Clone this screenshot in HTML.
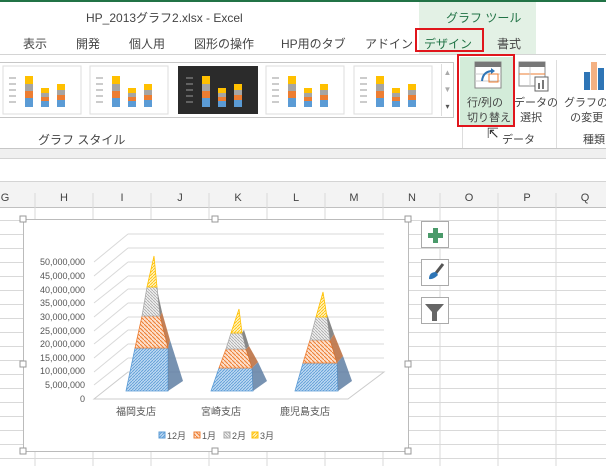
<!DOCTYPE html>
<html><head><meta charset="utf-8"><style>
*{margin:0;padding:0;box-sizing:border-box}
body{width:606px;height:466px;overflow:hidden;background:#fff;font-family:"Liberation Sans","Noto Sans CJK JP",sans-serif;position:relative;color:#444}
.a{position:absolute;white-space:nowrap}
.tab{position:absolute;top:35px;font-size:12px;color:#444}
</style></head><body>
<div class="a" style="left:0;top:0;width:606px;height:2px;background:#217346"></div>
<div class="a" style="left:419px;top:2px;width:117px;height:53px;background:#e3f1e5"></div>
<div class="a" style="left:86px;top:9px;font-size:12px;color:#444">HP_2013グラフ2.xlsx - Excel</div>
<div class="a" style="left:446px;top:9px;font-size:12px;color:#217346">グラフ ツール</div>
<div class="tab" style="left:23px">表示</div>
<div class="tab" style="left:76px">開発</div>
<div class="tab" style="left:129px">個人用</div>
<div class="tab" style="left:194px">図形の操作</div>
<div class="tab" style="left:281px">HP用のタブ</div>
<div class="tab" style="left:365px">アドイン</div>
<div class="a" style="left:415px;top:28px;width:69px;height:24px;border:2px solid #e0161c"></div>
<div class="tab" style="left:424px;color:#217346">デザイン</div>
<div class="tab" style="left:497px">書式</div>
<div class="a" style="left:0;top:54px;width:606px;height:1px;background:#d4d4d4"></div>
<div class="a" style="left:0;top:62px;width:454px;height:56px;border:1px solid #c6c6c6;border-left:none"></div>
<svg class="a" style="left:0;top:64px" width="440" height="52">
<defs><g id="th">
<g stroke="#999" stroke-width="1"><line x1="6" y1="12" x2="13" y2="12"/><line x1="6" y1="18" x2="13" y2="18"/><line x1="6" y1="24" x2="13" y2="24"/><line x1="6" y1="30" x2="13" y2="30"/><line x1="6" y1="36" x2="13" y2="36"/></g>
<rect x="22" y="10" width="8" height="8" fill="#ffc000"/><rect x="22" y="18" width="8" height="7" fill="#a5a5a5"/><rect x="22" y="25" width="8" height="7" fill="#ed7d31"/><rect x="22" y="32" width="8" height="9" fill="#5b9bd5"/>
<rect x="38" y="22" width="8" height="5" fill="#ffc000"/><rect x="38" y="27" width="8" height="4" fill="#a5a5a5"/><rect x="38" y="31" width="8" height="4" fill="#ed7d31"/><rect x="38" y="35" width="8" height="6" fill="#5b9bd5"/>
<rect x="54" y="18" width="8" height="6" fill="#ffc000"/><rect x="54" y="24" width="8" height="5" fill="#a5a5a5"/><rect x="54" y="29" width="8" height="5" fill="#ed7d31"/><rect x="54" y="34" width="8" height="7" fill="#5b9bd5"/></g></defs>
<g fill="#fff" stroke="#ddd"><rect x="3" y="2" width="78" height="48"/><rect x="90" y="2" width="78" height="48"/><rect x="266" y="2" width="78" height="48"/><rect x="354" y="2" width="78" height="48"/></g>
<rect x="178" y="2" width="80" height="48" fill="#2b2b2b"/>
<use href="#th" x="3" y="2"/><use href="#th" x="90" y="2"/><use href="#th" x="180" y="2"/>
<use href="#th" x="266" y="2"/><use href="#th" x="354" y="2"/>
</svg>
<div class="a" style="left:441px;top:64px;width:12px;height:52px;border-left:1px solid #ddd;font-size:8px;color:#aaa;text-align:center;line-height:17px">▲<br>▼<br><span style="color:#555">▾</span></div>
<div class="a" style="left:38px;top:131px;font-size:12px;color:#444">グラフ スタイル</div>
<div class="a" style="left:462px;top:60px;width:1px;height:88px;background:#ddd"></div>
<div class="a" style="left:556px;top:60px;width:1px;height:88px;background:#ddd"></div>
<div class="a" style="left:460px;top:57px;width:53px;height:68px;background:#d3ecd9"></div>
<div class="a" style="left:457px;top:54px;width:58px;height:73px;border:2px solid #e0161c"></div>
<svg class="a" style="left:474px;top:61px" width="30" height="30"><rect x="1" y="1" width="26" height="26" fill="#fff" stroke="#888"/><rect x="1" y="1" width="26" height="5" fill="#777"/><line x1="1" y1="13" x2="27" y2="13" stroke="#ccc"/><line x1="1" y1="20" x2="27" y2="20" stroke="#ccc"/><rect x="15" y="13" width="9" height="8" fill="none" stroke="#ed7d31"/><path d="M8 20 Q9 10 19 10" fill="none" stroke="#2e75b6" stroke-width="2"/><path d="M17 7l4 3-4 3z" fill="#2e75b6"/></svg>
<div class="a" style="left:467px;top:96px;font-size:11px;line-height:15px;color:#444">行/列の<br>切り替え</div>
<svg class="a" style="left:518px;top:61px" width="32" height="32"><rect x="1" y="1" width="26" height="24" fill="#fff" stroke="#888"/><rect x="1" y="1" width="26" height="5" fill="#777"/><line x1="1" y1="13" x2="27" y2="13" stroke="#ed7d31"/><line x1="12" y1="6" x2="12" y2="25" stroke="#ccc"/><rect x="17" y="16" width="13" height="14" fill="#fff" stroke="#666"/><rect x="20" y="22" width="2" height="6" fill="#777"/><rect x="24" y="19" width="2" height="9" fill="#777"/></svg>
<div class="a" style="left:514px;top:96px;font-size:11px;line-height:15px;color:#444">データの<br>&nbsp;&nbsp;選択</div>
<svg class="a" style="left:583px;top:60px" width="23" height="32"><rect x="1" y="12" width="6" height="18" fill="#2e75b6"/><rect x="8" y="2" width="6" height="28" fill="#f4b183"/><rect x="15" y="8" width="6" height="22" fill="#2e75b6"/></svg>
<div class="a" style="left:564px;top:96px;font-size:11px;line-height:15px">グラフの種<br>&nbsp;&nbsp;の変更</div>
<div class="a" style="left:502px;top:131px;font-size:11px">データ</div>
<div class="a" style="left:583px;top:131px;font-size:11px">種類</div>
<div class="a" style="left:487px;top:125px;font-size:14px;color:#333">⇱</div>
<div class="a" style="left:0;top:148px;width:606px;height:1px;background:#c6c6c6"></div>
<div class="a" style="left:0;top:149px;width:606px;height:9px;background:#f0f0f0"></div>
<div class="a" style="left:0;top:158px;width:606px;height:1px;background:#d4d4d4"></div>
<!-- sheet -->
<svg class="a" style="left:0;top:181px" width="606" height="285">
<rect x="0" y="0" width="606" height="26" fill="#f3f3f3"/><line x1="0" y1="0.5" x2="606" y2="0.5" stroke="#d4d4d4"/><line x1="0" y1="26.5" x2="606" y2="26.5" stroke="#c0c0c0"/>
<g stroke="#d9d9d9">
<line x1="35" y1="12" x2="35" y2="285"/><line x1="93" y1="12" x2="93" y2="285"/><line x1="151" y1="12" x2="151" y2="285"/><line x1="209" y1="12" x2="209" y2="285"/><line x1="267" y1="12" x2="267" y2="285"/><line x1="325" y1="12" x2="325" y2="285"/><line x1="383" y1="12" x2="383" y2="285"/><line x1="440" y1="12" x2="440" y2="285"/><line x1="498" y1="12" x2="498" y2="285"/><line x1="556" y1="12" x2="556" y2="285"/>
<line x1="0" y1="39.5" x2="606" y2="39.5"/><line x1="0" y1="53.5" x2="606" y2="53.5"/><line x1="0" y1="67.5" x2="606" y2="67.5"/><line x1="0" y1="81.5" x2="606" y2="81.5"/><line x1="0" y1="95.5" x2="606" y2="95.5"/><line x1="0" y1="109.5" x2="606" y2="109.5"/><line x1="0" y1="123.5" x2="606" y2="123.5"/><line x1="0" y1="137.5" x2="606" y2="137.5"/><line x1="0" y1="151.5" x2="606" y2="151.5"/><line x1="0" y1="165.5" x2="606" y2="165.5"/><line x1="0" y1="179.5" x2="606" y2="179.5"/><line x1="0" y1="193.5" x2="606" y2="193.5"/><line x1="0" y1="207.5" x2="606" y2="207.5"/><line x1="0" y1="221.5" x2="606" y2="221.5"/><line x1="0" y1="235.5" x2="606" y2="235.5"/><line x1="0" y1="249.5" x2="606" y2="249.5"/><line x1="0" y1="263.5" x2="606" y2="263.5"/><line x1="0" y1="277.5" x2="606" y2="277.5"/>
</g>
<g font-size="11" fill="#444" text-anchor="middle" font-family="Liberation Sans"><text x="5" y="20">G</text><text x="64" y="20">H</text><text x="122" y="20">I</text><text x="180" y="20">J</text><text x="238" y="20">K</text><text x="296" y="20">L</text><text x="354" y="20">M</text><text x="412" y="20">N</text><text x="469" y="20">O</text><text x="527" y="20">P</text><text x="585" y="20">Q</text></g>
</svg>
<!-- chart -->
<svg class="a" style="left:0;top:0" width="606" height="466">
<defs>
<pattern id="pb" width="3" height="3" patternUnits="userSpaceOnUse"><rect width="3" height="3" fill="#bcd8f2"/><path d="M0 3L3 0" stroke="#5b9bd5" stroke-width="0.8"/></pattern>
<pattern id="po" width="4" height="4" patternUnits="userSpaceOnUse"><rect width="4" height="4" fill="#fde0cc"/><path d="M0 0L4 4" stroke="#ed7d31" stroke-width="1"/></pattern>
<pattern id="pg" width="3" height="3" patternUnits="userSpaceOnUse"><rect width="3" height="3" fill="#eee"/><path d="M0 0L3 3" stroke="#aaa" stroke-width="0.8"/></pattern>
<pattern id="py" width="3" height="3" patternUnits="userSpaceOnUse"><rect width="3" height="3" fill="#fff2bf"/><path d="M0 3L3 0" stroke="#ffc000" stroke-width="0.8"/></pattern>
</defs>
<rect x="23.5" y="219.5" width="385" height="232" fill="#fff" stroke="#bbb"/>
<g fill="#fff" stroke="#999"><rect x="20" y="216" width="6" height="6"/><rect x="212" y="216" width="6" height="6"/><rect x="405" y="216" width="6" height="6"/><rect x="20" y="361" width="6" height="6"/><rect x="405" y="361" width="6" height="6"/><rect x="20" y="448" width="6" height="6"/><rect x="212" y="448" width="6" height="6"/><rect x="405" y="448" width="6" height="6"/></g>
<g stroke="#d9d9d9">
<line x1="128" y1="234" x2="384" y2="234"/><line x1="128" y1="248" x2="384" y2="248"/><line x1="128" y1="262" x2="384" y2="262"/><line x1="128" y1="276" x2="384" y2="276"/><line x1="128" y1="289" x2="384" y2="289"/><line x1="128" y1="303" x2="384" y2="303"/><line x1="128" y1="317" x2="384" y2="317"/><line x1="128" y1="330" x2="384" y2="330"/><line x1="128" y1="344" x2="384" y2="344"/><line x1="128" y1="358" x2="384" y2="358"/>
<line x1="94" y1="262" x2="128" y2="234"/><line x1="94" y1="276" x2="128" y2="248"/><line x1="94" y1="290" x2="128" y2="262"/><line x1="94" y1="303" x2="128" y2="276"/><line x1="94" y1="317" x2="128" y2="289"/><line x1="94" y1="331" x2="128" y2="303"/><line x1="94" y1="344" x2="128" y2="317"/><line x1="94" y1="358" x2="128" y2="330"/><line x1="94" y1="372" x2="128" y2="344"/><line x1="94" y1="385" x2="128" y2="358"/>
</g>
<path d="M94 399L128 372L384 372L348 399Z" fill="#fff" stroke="#ccc"/>
<g font-size="9" fill="#555" text-anchor="end" font-family="Liberation Sans"><text x="85" y="265">50,000,000</text><text x="85" y="279">45,000,000</text><text x="85" y="293">40,000,000</text><text x="85" y="306">35,000,000</text><text x="85" y="320">30,000,000</text><text x="85" y="334">25,000,000</text><text x="85" y="347">20,000,000</text><text x="85" y="361">15,000,000</text><text x="85" y="374">10,000,000</text><text x="85" y="388">5,000,000</text><text x="85" y="402">0</text></g>
<g stroke-width="0.8">
<path d="M126 391L135 348L168 348L168 391Z" fill="url(#pb)" stroke="#5b9bd5"/>
<path d="M168 391L183 381L170 340L168 348Z" fill="#5f7fa3" opacity="0.85"/>
<path d="M135 348L142 316L160 316L168 348Z" fill="url(#po)" stroke="#ed7d31"/>
<path d="M168 348L170 340L162 312L160 316Z" fill="#b86a3a" opacity="0.85"/>
<path d="M142 316L147 287L157 287L160 316Z" fill="url(#pg)" stroke="#aaa"/>
<path d="M160 316L162 312L156 285L157 287Z" fill="#888"/>
<path d="M147 287L154 256L157 287Z" fill="url(#py)" stroke="#ffc000"/>
</g>
<g stroke-width="0.8">
<path d="M211 391L219 368L252 368L253 391Z" fill="url(#pb)" stroke="#5b9bd5"/>
<path d="M253 391L267 381L258 362L252 368Z" fill="#5f7fa3" opacity="0.85"/>
<path d="M219 368L226 349L246 349L252 368Z" fill="url(#po)" stroke="#ed7d31"/>
<path d="M252 368L258 362L249 346L246 349Z" fill="#b86a3a" opacity="0.85"/>
<path d="M226 349L231 333L242 333L246 349Z" fill="url(#pg)" stroke="#aaa"/>
<path d="M246 349L249 346L244 330L242 333Z" fill="#888"/>
<path d="M231 333L239 309L242 333Z" fill="url(#py)" stroke="#ffc000"/>
</g>
<g stroke-width="0.8">
<path d="M295 391L303 363L337 363L338 391Z" fill="url(#pb)" stroke="#5b9bd5"/>
<path d="M338 391L352 381L343 356L337 363Z" fill="#5f7fa3" opacity="0.85"/>
<path d="M303 363L310 340L330 340L337 363Z" fill="url(#po)" stroke="#ed7d31"/>
<path d="M337 363L343 356L334 334L330 340Z" fill="#b86a3a" opacity="0.85"/>
<path d="M310 340L316 317L327 317L330 340Z" fill="url(#pg)" stroke="#aaa"/>
<path d="M330 340L334 334L327 314L327 317Z" fill="#888"/>
<path d="M316 317L323 292L327 317Z" fill="url(#py)" stroke="#ffc000"/>
</g>
<g font-size="10" fill="#555" font-family="Liberation Sans,Noto Sans CJK JP" text-anchor="middle"><text x="136" y="415">福岡支店</text><text x="221" y="415">宮崎支店</text><text x="305" y="415">鹿児島支店</text></g>
<g font-size="9" fill="#555" font-family="Liberation Sans,Noto Sans CJK JP"><rect x="159" y="432" width="6" height="6" fill="url(#pb)" stroke="#5b9bd5"/><text x="167" y="439">12月</text><rect x="194" y="432" width="6" height="6" fill="url(#po)" stroke="#ed7d31"/><text x="202" y="439">1月</text><rect x="224" y="432" width="6" height="6" fill="url(#pg)" stroke="#aaa"/><text x="232" y="439">2月</text><rect x="252" y="432" width="6" height="6" fill="url(#py)" stroke="#ffc000"/><text x="260" y="439">3月</text></g>
<g fill="#fff" stroke="#aaa"><rect x="421.5" y="221.5" width="27" height="26"/><rect x="421.5" y="259.5" width="27" height="26"/><rect x="421.5" y="297.5" width="27" height="26"/></g>
<path d="M433 228h5v5h5v5h-5v5h-5v-5h-5v-5h5z" fill="#4a9a6a"/>
<path d="M443 264L436 273" stroke="#555" stroke-width="3"/><path d="M429 279Q429 272 436 272L438 275Q433 280 429 279Z" fill="#2e75b6"/>
<path d="M425 304h19l-7 8v9h-5v-9z" fill="#666"/>
</svg>
</body></html>
